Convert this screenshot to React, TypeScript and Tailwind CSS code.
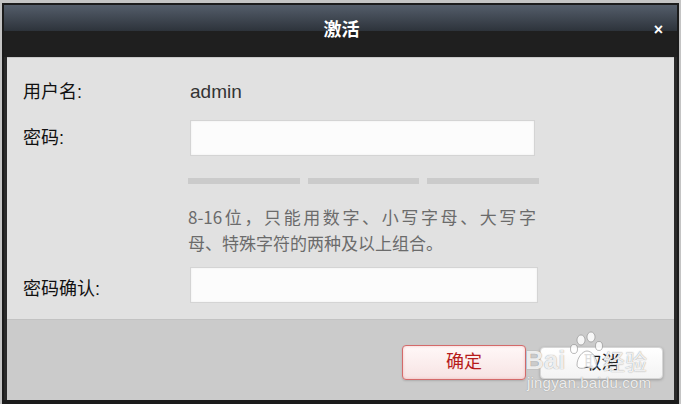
import React from "react";

const cjk = { fontFamily: '"Liberation Sans", "Noto Sans CJK SC", sans-serif' };

export default function App() {
  return (
    <div className="w-[681px] h-[404px] bg-[#c4c4c4] pt-[3px] px-[2px] overflow-hidden" style={cjk}>
      <div className="relative h-[401px] border-x-[2px] border-t-[2px] border-b-[4px] border-[#1b1b1b] flex flex-col">
        {/* title bar */}
        <div className="relative h-[52px] shrink-0 bg-[linear-gradient(to_bottom,#545d6a_0%,#2e343c_49%,#1f1f1f_50%,#1f1f1f_100%)] flex items-center justify-center">
          <span className="text-white text-[18px] font-bold leading-none mt-[-2px] ml-[2px]">激活</span>
          <span className="absolute right-[14px] top-[17px] text-white text-[16px] font-bold leading-none">×</span>
        </div>
        {/* body */}
        <div className="flex-1 flex flex-col border-x-[3px] border-[#2a2a2a]">
          <div className="bg-[#e1e1e1] h-[262px] shrink-0 pl-[16px] border-t border-[#c9c9c9]">
            {/* username */}
            <div className="mt-[16px] h-[36px] flex items-center">
              <div className="w-[167px] text-[18px] text-[#111]">用户名:</div>
              <div className="text-[19px] text-[#333]">admin</div>
            </div>
            {/* password */}
            <div className="mt-[10px] h-[36px] flex items-center">
              <div className="w-[167px] text-[18px] text-[#111]">密码:</div>
              <div className="w-[345px] h-[36px] bg-[#fcfcfc] border border-[#d4d4d4] shadow-[inset_0_0_2px_rgba(0,0,0,0.08)]"></div>
            </div>
            {/* strength bars */}
            <div className="mt-[22px] ml-[165px] flex gap-[8px]">
              <div className="w-[112px] h-[6px] bg-[#cbcbcb]"></div>
              <div className="w-[111px] h-[6px] bg-[#cbcbcb]"></div>
              <div className="w-[112px] h-[6px] bg-[#cbcbcb]"></div>
            </div>
            {/* hint */}
            <div className="mt-[20px] ml-[165px] w-[348px] text-[17px] leading-[26px] text-[#6b6b6b]" style={{ fontFamily: '"Noto Sans CJK SC", sans-serif' }}>
              <div className="[text-align-last:justify] text-justify">8-16位，只能用数字、小写字母、大写字</div>
              <div>母、特殊字符的两种及以上组合。</div>
            </div>
            {/* confirm */}
            <div className="mt-[11px] h-[36px] flex items-center">
              <div className="w-[167px] text-[18px] text-[#111] mt-[8px]">密码确认:</div>
              <div className="w-[348px] h-[36px] bg-[#fcfcfc] border border-[#d4d4d4] shadow-[inset_0_0_2px_rgba(0,0,0,0.08)]"></div>
            </div>
          </div>
          {/* footer */}
          <div className="flex-1 bg-[#cbcbcb] border-t border-[#c2c2c2] flex justify-end items-start pt-[25px] pr-[11px] gap-[14px]">
            <button className="w-[124px] h-[35px] rounded-[4px] border border-[#d46a6a] bg-[linear-gradient(to_bottom,#fff8f8,#f7e3e3)] shadow-[0_1px_2px_rgba(0,0,0,0.15),inset_0_0_3px_rgba(220,120,120,0.4)] text-[18px] text-[#b71c1c] flex items-center justify-center">
              确定
            </button>
            <button className="w-[123px] h-[32px] mt-[2px] rounded-[4px] border border-[#d6d6d6] bg-[linear-gradient(to_bottom,#ffffff,#f3f3f3)] shadow-[0_1px_3px_rgba(0,0,0,0.25)] text-[18px] text-[#1a1a1a] flex items-center justify-center">
              取消
            </button>
          </div>
        </div>

        {/* Baidu watermark */}
        <div className="absolute left-[521px] top-[322px] w-[130px] h-[66px] pointer-events-none text-white/85 [text-shadow:0_0_1px_rgba(120,120,120,0.9)]">
          <div className="absolute left-0 top-[20px] text-[26px] font-bold leading-none" style={{ fontFamily: '"Liberation Sans", sans-serif' }}>Bai</div>
          <svg className="absolute left-[44px] top-[4px]" width="40" height="42" viewBox="0 0 40 42">
            <g fill="rgba(255,255,255,0.85)" stroke="rgba(130,130,130,0.7)" strokeWidth="0.8">
              <ellipse cx="12" cy="9" rx="4" ry="5" />
              <ellipse cx="22" cy="6" rx="4" ry="5" />
              <ellipse cx="5" cy="18" rx="3.5" ry="4.5" />
              <ellipse cx="30" cy="15" rx="3.5" ry="4.5" />
              <path d="M8 34 C8 26 14 20 18 20 C23 20 28 27 28 33 C28 38 22 38 18 36 C14 38 8 38 8 34 Z" />
            </g>
          </svg>
          <div className="absolute left-[78px] top-[22px] text-[22px] leading-none" style={{ fontFamily: '"Noto Sans CJK SC", sans-serif' }}>经验</div>
          <div className="absolute left-[2px] top-[48px] text-[15px] leading-none tracking-[0.2px]" style={{ fontFamily: '"Liberation Sans", sans-serif' }}>jingyan.baidu.com</div>
        </div>
      </div>
    </div>
  );
}
